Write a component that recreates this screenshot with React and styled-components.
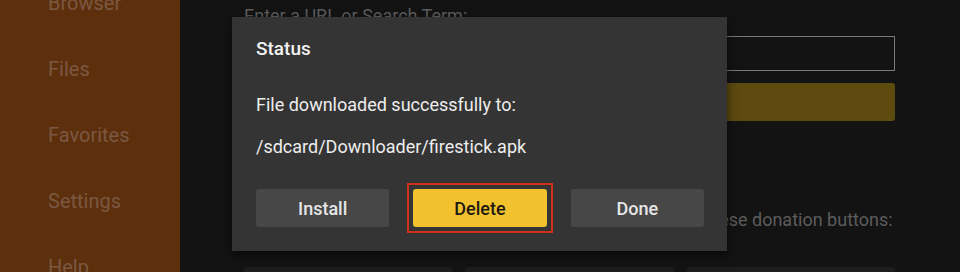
import React from 'react';
import styled, { createGlobalStyle } from 'styled-components';

const GlobalStyle = createGlobalStyle`
  html, body {
    margin: 0;
    padding: 0;
    background: #131313;
  }
  * {
    box-sizing: border-box;
  }
`;

const Screen = styled.div`
  position: relative;
  display: flex;
  width: 960px;
  height: 272px;
  overflow: hidden;
  font-family: Roboto, "Liberation Sans", sans-serif;
  background: #131313;
`;

const Sidebar = styled.nav`
  flex: 0 0 180px;
  display: flex;
  flex-direction: column;
  gap: 40px;
  margin-top: -10px;
  padding-left: 48px;
  background: #5e2f0c;
`;

const NavItem = styled.div`
  flex-shrink: 0;
  font-size: 20px;
  line-height: 26px;
  color: #7a5842;
`;

const Main = styled.main`
  flex: 1;
  min-width: 0;
  display: flex;
  flex-direction: column;
  padding: 5px 65px 0 64px;

  & > * {
    flex-shrink: 0;
  }
`;

const Label = styled.div`
  font-size: 18px;
  line-height: 22px;
  white-space: nowrap;
  color: #5c5c5c;
`;

const UrlInput = styled.div`
  height: 35px;
  border: 1px solid #7a7a7a;
  margin-top: 9px;
  margin-bottom: 12px;
`;

const GoBar = styled.div`
  height: 38px;
  border-radius: 3px;
  background: #5e4b10;
  margin-bottom: 88px;
`;

const DonateRow = styled.div`
  display: flex;
  gap: 13px;
  margin-top: 36px;
`;

const DonateBox = styled.div`
  flex: 1;
  height: 30px;
  border-radius: 3px;
  background: #1d1d1d;
`;

const Dialog = styled.div`
  position: absolute;
  left: 232px;
  top: 17px;
  width: 495px;
  height: 234px;
  display: flex;
  flex-direction: column;
  padding: 20px 23px 0 24px;
  background: #343434;
  box-shadow: 0 4px 10px rgba(0, 0, 0, 0.55);
`;

const Title = styled.div`
  font-size: 19px;
  font-weight: 500;
  line-height: 24px;
  color: #f2f2f2;
  margin-bottom: 32px;
`;

const Message = styled.div`
  font-size: 18px;
  line-height: 24px;
  color: #ededed;
  margin-bottom: ${({ $gap }) => $gap}px;
`;

const Actions = styled.div`
  display: flex;
  gap: 24px;
`;

const ActionButton = styled.button`
  position: relative;
  flex: 1;
  height: 38px;
  border: none;
  border-radius: 3px;
  font-family: inherit;
  font-size: 18px;
  font-weight: 500;
  outline: none;
  background: ${({ $primary }) => ($primary ? '#f2c12e' : '#474747')};
  color: ${({ $primary }) => ($primary ? '#1e1a10' : '#e6e6e6')};

  &::after {
    content: '';
    display: ${({ $focused }) => ($focused ? 'block' : 'none')};
    position: absolute;
    inset: -6px;
    border: 2px solid #d2301e;
  }
`;

const navItems = ['Browser', 'Files', 'Favorites', 'Settings', 'Help'];

export default function App() {
  return (
    <>
      <GlobalStyle />
      <Screen>
        <Sidebar>
          {navItems.map((item) => (
            <NavItem key={item}>{item}</NavItem>
          ))}
        </Sidebar>
        <Main>
          <Label>Enter a URL or Search Term:</Label>
          <UrlInput />
          <GoBar />
          <Label>If you found this app useful, please consider using one of these donation buttons:</Label>
          <DonateRow>
            <DonateBox />
            <DonateBox />
            <DonateBox />
          </DonateRow>
        </Main>
        <Dialog>
          <Title>Status</Title>
          <Message $gap={18}>File downloaded successfully to:</Message>
          <Message $gap={30}>/sdcard/Downloader/firestick.apk</Message>
          <Actions>
            <ActionButton>Install</ActionButton>
            <ActionButton $primary $focused>Delete</ActionButton>
            <ActionButton>Done</ActionButton>
          </Actions>
        </Dialog>
      </Screen>
    </>
  );
}
